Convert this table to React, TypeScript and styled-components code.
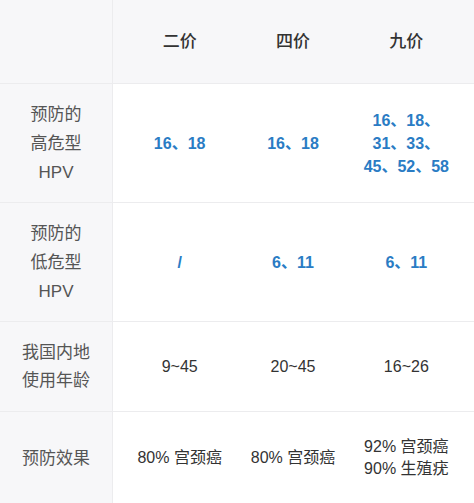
import React from 'react';
import styled, {createGlobalStyle} from 'styled-components';

const GlobalStyle = createGlobalStyle`
  html, body {
    margin: 0;
    padding: 0;
    background: #ffffff;
  }
  body {
    font-family: "Liberation Sans", "Noto Sans CJK SC", sans-serif;
  }
`;

const Table = styled.div`
  width: 474px;
  height: 503px;
  display: grid;
  grid-template-rows: 84px 119px 119px 90px 1fr;
  background: #ffffff;
`;

const Row = styled.div<{ $head?: boolean; $last?: boolean }>`
  display: grid;
  grid-template-columns: 113px 1fr;
  background: ${p => (p.$head ? '#f7f7f9' : '#ffffff')};
  border-bottom: ${p => (p.$last ? 'none' : '1px solid #ececee')};
`;

const Label = styled.div<{ $lh?: number }>`
  background: #f7f7f9;
  border-right: 1px solid #ececee;
  display: flex;
  align-items: center;
  justify-content: center;
  text-align: center;
  color: #555555;
  font-size: 17px;
  line-height: ${p => p.$lh ?? 29}px;
  padding-top: 1px;
`;

const Values = styled.div`
  display: grid;
  grid-template-columns: repeat(3, 1fr);
  padding: 0 11px 0 10px;
`;

const Cell = styled.div<{ $tone?: 'head' | 'blue' | 'dark'; $lh?: number }>`
  display: flex;
  align-items: center;
  justify-content: center;
  text-align: center;
  font-size: ${p => (p.$tone === 'head' ? 17 : 16)}px;
  font-weight: ${p => (p.$tone === 'dark' ? 400 : p.$tone === 'head' ? 500 : 600)};
  color: ${p => (p.$tone === 'blue' ? '#2a7cc4' : '#333333')};
  line-height: ${p => p.$lh ?? 22}px;
  white-space: nowrap;
  padding-top: 1px;
`;

const Lines = ({items}: { items: string[] }) => (
    <div>
        {items.map(t => <div key={t}>{t}</div>)}
    </div>
);

const App = () => {
    return (
        <>
            <GlobalStyle/>
            <Table>
                <Row $head>
                    <Label/>
                    <Values>
                        <Cell $tone="head">二价</Cell>
                        <Cell $tone="head">四价</Cell>
                        <Cell $tone="head">九价</Cell>
                    </Values>
                </Row>
                <Row>
                    <Label><Lines items={['预防的', '高危型', 'HPV']}/></Label>
                    <Values>
                        <Cell $tone="blue">16、18</Cell>
                        <Cell $tone="blue">16、18</Cell>
                        <Cell $tone="blue" $lh={23}>
                            <Lines items={['16、18、', '31、33、', '45、52、58']}/>
                        </Cell>
                    </Values>
                </Row>
                <Row>
                    <Label><Lines items={['预防的', '低危型', 'HPV']}/></Label>
                    <Values>
                        <Cell $tone="blue">/</Cell>
                        <Cell $tone="blue">6、11</Cell>
                        <Cell $tone="blue">6、11</Cell>
                    </Values>
                </Row>
                <Row>
                    <Label $lh={28}><Lines items={['我国内地', '使用年龄']}/></Label>
                    <Values>
                        <Cell $tone="dark">9~45</Cell>
                        <Cell $tone="dark">20~45</Cell>
                        <Cell $tone="dark">16~26</Cell>
                    </Values>
                </Row>
                <Row $last>
                    <Label>预防效果</Label>
                    <Values>
                        <Cell $tone="dark">80% 宫颈癌</Cell>
                        <Cell $tone="dark">80% 宫颈癌</Cell>
                        <Cell $tone="dark">
                            <Lines items={['92% 宫颈癌', '90% 生殖疣']}/>
                        </Cell>
                    </Values>
                </Row>
            </Table>
        </>
    );
};

export default App;
